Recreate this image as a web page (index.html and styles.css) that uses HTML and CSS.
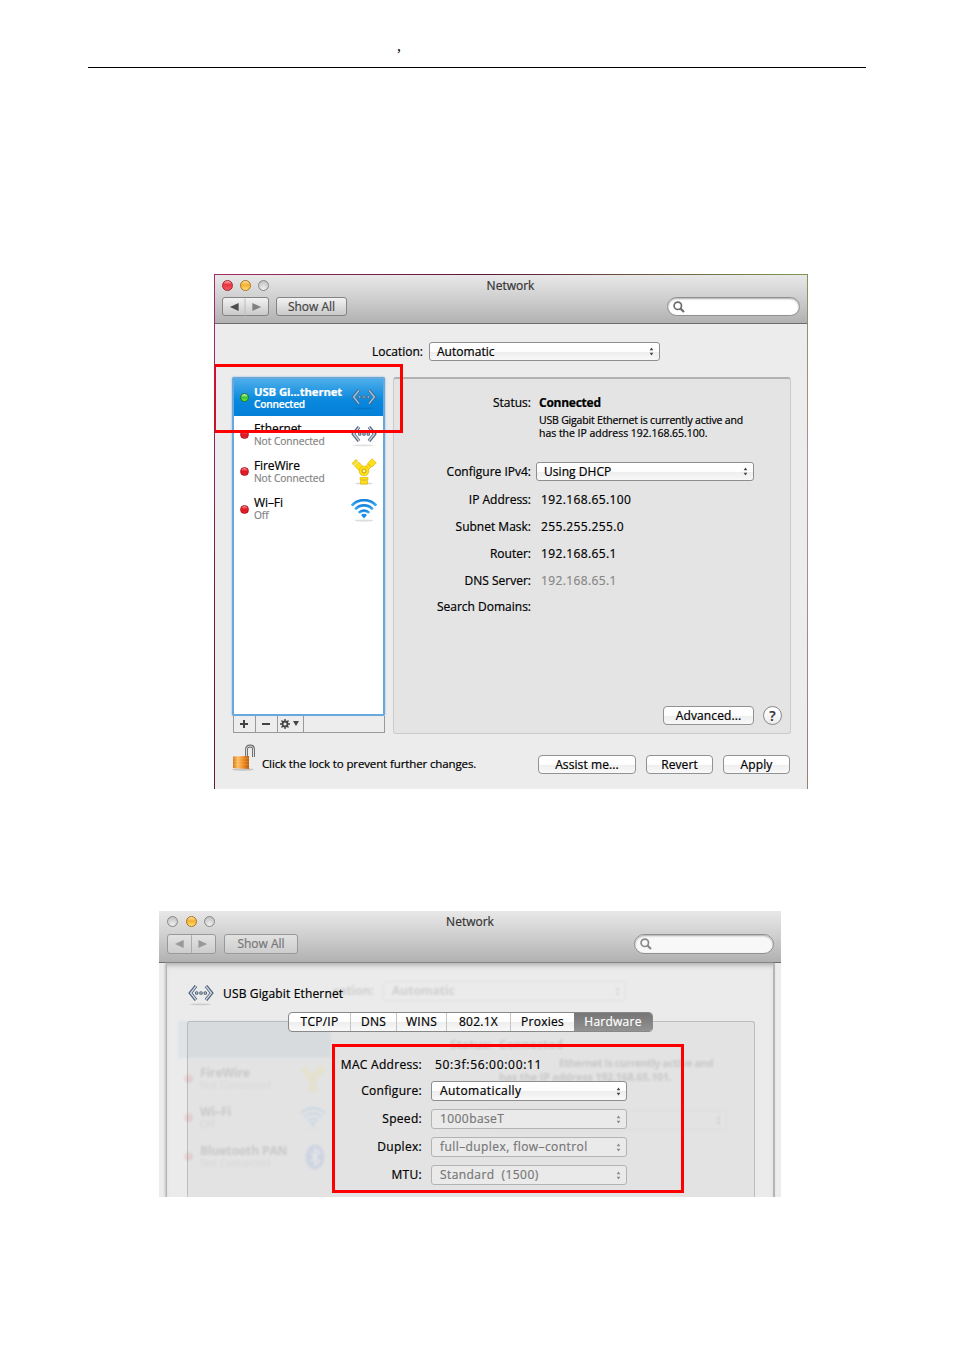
FILE: index.html
```html
<!DOCTYPE html>
<html lang="en">
<head>
<meta charset="utf-8">
<title>Network</title>
<link rel="stylesheet" href="styles.css">
</head>
<body>
<svg class="defs" width="0" height="0">
  <defs>
    <linearGradient id="blue" x1="0" y1="0" x2="0" y2="1"><stop offset="0" stop-color="#1b83dc"/><stop offset="1" stop-color="#35b0fb"/></linearGradient>
    <linearGradient id="gold" x1="0" y1="0" x2="1" y2="0"><stop offset="0" stop-color="#d9761a"/><stop offset=".3" stop-color="#ffc267"/><stop offset=".65" stop-color="#ef8b22"/><stop offset="1" stop-color="#b95d12"/></linearGradient>
    <symbol id="ethernet" viewBox="0 0 26 22">
      <ellipse cx="12.500" cy="20.300" rx="11" ry=".9" fill="#000" opacity=".13"/>
      <g fill="none" stroke="#52647b" stroke-width="3.400"><path d="M8 2 2.400 9 8 16M18 2 23.600 9 18 16"/></g>
      <g fill="none" stroke="#d3dce8" stroke-width="1.300"><path d="M8 2.300 2.600 9 8 15.700M18 2.300 23.400 9 18 15.700"/></g>
      <g fill="#dbe3ec" stroke="#52647b" stroke-width="1.100"><circle cx="8.700" cy="9" r="1.300"/><circle cx="13" cy="9" r="1.300"/><circle cx="17.300" cy="9" r="1.300"/></g>
    </symbol>
    <symbol id="firewire" viewBox="0 0 26 28">
      <ellipse cx="13" cy="25.500" rx="9" ry="1.200" fill="#000" opacity=".15"/>
      <g fill="#ffe11c" stroke="#e0b400" stroke-width=".7">
        <path d="M9 19.500h8v2H9zM9.500 22.500h7v3.500h-7zM1 5.500 5.200 1.500 6.600 3 2.600 7zM3.600 8 7.600 4l4.400 4.500-4 4zM16.500 5.500 21 .8 25.300 4.800 21 9z"/>
        <path d="m17 6 3 3-3.500 3.500-3-3z"/>
        <circle cx="13" cy="13" r="4.800"/>
      </g>
      <circle cx="13" cy="13" r="2" fill="#fff6b0" stroke="#c99d00"/>
    </symbol>
    <symbol id="wifi" viewBox="0 0 26 24">
      <ellipse cx="13" cy="21.500" rx="9" ry="1" fill="#000" opacity=".14"/>
      <g fill="none" stroke="url(#blue)" stroke-width="2.700"><path d="M.8 6.600C7.400-.7 18.600-.7 25.200 6.600"/><path d="M4.300 10.300c4.900-5.200 12.500-5.200 17.400 0"/><path d="M7.800 13.900c3-3 7.400-3 10.400 0"/></g>
      <path d="M10 16c1.700-1.700 4.300-1.700 6 0L13 19.500z" fill="#1c8fec"/>
    </symbol>
    <symbol id="bluetooth" viewBox="0 0 20 26"><ellipse cx="10" cy="13" rx="9.500" ry="12.500" fill="#2f62e0"/><path d="m5.500 8.500 9 9L10 21V5l4.500 3.500-9 9" fill="none" stroke="#fff" stroke-width="1.600"/></symbol>
    <symbol id="glass" viewBox="0 0 12 12"><circle cx="4.800" cy="4.800" r="3.700" fill="none" stroke="currentColor" stroke-width="1.700"/><path d="m7.500 7.500 3.500 3.500" stroke="currentColor" stroke-width="2.200"/></symbol>
    <symbol id="updown" viewBox="0 0 6 10"><path d="M.8 3.600h4.400L3 .2zM.8 6.400h4.400L3 9.800z" fill="currentColor"/></symbol>
  </defs>
</svg>

<div class="page">
  <header class="page-head">,</header>

  <section class="window first">
    <div class="titlebar">
      <div class="caption"><i class="light red"></i><i class="light amber"></i><i class="light"></i><span class="title">Network</span></div>
      <div class="toolbar">
        <div class="btn nav"><svg viewBox="0 0 46 18"><path d="M7 9l9-4v8z" fill="#4c4c4c"/><path d="M22.500 0v18" stroke="#bbb"/><path d="M39 9l-9-4v8z" fill="#808080"/></svg></div>
        <div class="btn showall">Show All</div>
        <div class="search"><svg><use href="#glass"/></svg></div>
      </div>
    </div>
    <div class="location"><span>Location:</span><div class="select"><b>Automatic</b><svg><use href="#updown"/></svg></div></div>
    <div class="main">
      <aside>
        <div class="list">
          <div class="item on"><i class="dot green"></i><div><strong>USB Gi...thernet</strong><small>Connected</small></div><svg class="eth"><use href="#ethernet"/></svg></div>
          <div class="item"><i class="dot"></i><div><strong>Ethernet</strong><small>Not Connected</small></div><svg class="eth"><use href="#ethernet"/></svg></div>
          <div class="item"><i class="dot"></i><div><strong>FireWire</strong><small>Not Connected</small></div><svg class="fw"><use href="#firewire"/></svg></div>
          <div class="item"><i class="dot"></i><div><strong>Wi–Fi</strong><small>Off</small></div><svg class="wf"><use href="#wifi"/></svg></div>
        </div>
        <div class="tools">
          <span><svg viewBox="0 0 8 8"><path d="M4 0v8M0 4h8" stroke="#444" stroke-width="2"/></svg></span>
          <span><svg viewBox="0 0 8 8"><path d="M0 4h8" stroke="#444" stroke-width="2"/></svg></span>
          <span class="gear"><svg viewBox="0 0 20 10"><circle cx="5" cy="5" r="2.500" fill="none" stroke="#444" stroke-width="1.800"/><path d="M5 0v2M5 8v2M0 5h2M8 5h2M1.500 1.500l1.400 1.400M7.100 7.100l1.400 1.400M8.500 1.500 7.100 2.900M2.900 7.100 1.500 8.500" stroke="#444" stroke-width="1.400"/><path d="M13 2h6l-3 5z" fill="#444"/></svg></span>
        </div>
      </aside>
      <div class="panel">
        <div class="row status"><label>Status:</label><strong>Connected</strong></div>
        <p>USB Gigabit Ethernet is currently active and<br><span>has the IP address 192.168.65.100.</span></p>
        <div class="row conf"><label>Configure IPv4:</label><div class="select"><b>Using DHCP</b><svg><use href="#updown"/></svg></div></div>
        <div class="row"><label>IP Address:</label><span>192.168.65.100</span></div>
        <div class="row"><label>Subnet Mask:</label><span>255.255.255.0</span></div>
        <div class="row"><label>Router:</label><span>192.168.65.1</span></div>
        <div class="row"><label>DNS Server:</label><span class="dim">192.168.65.1</span></div>
        <div class="row"><label>Search Domains:</label></div>
        <div class="more"><div class="push adv">Advanced...</div><div class="help">?</div></div>
      </div>
    </div>
    <footer>
      <svg class="lock" viewBox="0 0 24 28"><ellipse cx="11" cy="25.500" rx="11" ry="1.500" fill="#000" opacity=".15"/><path d="M14.500 13V5q0-3 3.500-3t3.500 3v8" fill="none" stroke="#666" stroke-width="2.800"/><path d="M14.500 13V5q0-3 3.500-3t3.500 3v8" fill="none" stroke="#ddd" stroke-width="1"/><path d="M1 12.500 17 12v13L1 24z" fill="url(#gold)"/><path d="M1 14.500h16M1 17.500h16M1 20.500h16" stroke="#ffd58c" stroke-width=".4" opacity=".5"/></svg>
      <span class="hint">Click the lock to prevent further changes.</span>
      <div class="push assist">Assist me...</div><div class="push">Revert</div><div class="push">Apply</div>
    </footer>
    <div class="mark"></div>
  </section>

  <section class="window second">
    <div class="titlebar">
      <div class="caption"><i class="light"></i><i class="light amber"></i><i class="light"></i><span class="title">Network</span></div>
      <div class="toolbar">
        <div class="btn nav"><svg viewBox="0 0 48 18"><path d="M7 9l9-4v8z" fill="#999"/><path d="M24 0v18" stroke="#aaa"/><path d="M40 9l-9-4v8z" fill="#999"/></svg></div>
        <div class="btn showall">Show All</div>
        <div class="search"><svg><use href="#glass"/></svg></div>
      </div>
    </div>
    <div class="sheet">
      <div class="service"><svg class="eth"><use href="#ethernet"/></svg><span>USB Gigabit Ethernet</span></div>
      <div class="group">
        <div class="tabs"><span>TCP/IP</span><span>DNS</span><span>WINS</span><span>802.1X</span><span>Proxies</span><span class="on">Hardware</span></div>
        <div class="form">
          <div class="row"><label>MAC Address:</label><span class="mac">50:3f:56:00:00:11</span></div>
          <div class="row"><label>Configure:</label><div class="select"><b>Automatically</b><svg><use href="#updown"/></svg></div></div>
          <div class="row"><label>Speed:</label><div class="select off"><b>1000baseT</b><svg><use href="#updown"/></svg></div></div>
          <div class="row"><label>Duplex:</label><div class="select off"><b>full–duplex, flow–control</b><svg><use href="#updown"/></svg></div></div>
          <div class="row"><label>MTU:</label><div class="select off"><b>Standard&nbsp; (1500)</b><svg><use href="#updown"/></svg></div></div>
        </div>
      </div>
      <div class="ghost">
        <span class="g-loc">cation:</span><span class="g-auto">Automatic</span>
        <span class="g-sel"><svg><use href="#updown"/></svg></span>
        <span class="g-st">Status:</span><span class="g-con">Connected</span>
        <span class="g-desc"><span>Ethernet is currently active and</span><br>has the IP address 192.168.65.101.</span>
        <span class="g-dhcp"><svg><use href="#updown"/></svg></span>
        <div class="g-list">
          <div class="item"><i class="dot"></i><div><strong>FireWire</strong><small>Not Connected</small></div><svg class="fw"><use href="#firewire"/></svg></div>
          <div class="item"><i class="dot"></i><div><strong>Wi–Fi</strong><small>Off</small></div><svg class="wf"><use href="#wifi"/></svg></div>
          <div class="item"><i class="dot"></i><div><strong>Bluetooth PAN</strong><small>Not Connected</small></div><svg class="bt"><use href="#bluetooth"/></svg></div>
        </div>
      </div>
    </div>
    <div class="mark"></div>
  </section>
</div>
</body>
</html>
```
FILE: styles.css
```css
* { box-sizing: border-box; }
body { margin: 0; background: #fff; color: #000; font: 12px/16px "Open Sans", "Noto Sans", sans-serif; }
svg { display: block; }
.defs { position: absolute; }
.page { height: 1350px; overflow: hidden; }
.page-head { height: 68px; margin: 0 88px; padding: 37px 0 0 309px; border-bottom: 1px solid #000; font: 16px/17px "Liberation Serif", serif; color: #000; }

.window { position: relative; overflow: hidden; background: #ececec; white-space: nowrap; -webkit-text-stroke: .2px; }
.first { width: 594px; height: 515px; margin: 206px 0 0 214px; border: 1px solid; border-bottom: 0; border-image: linear-gradient(120deg, #a32e67 0, #5e1436 30%, #7b9650 65%, #b98c9a 80%, #8d8276 100%) 1; }
.second { width: 622px; height: 286px; margin: 122px 0 0 159px; }

.titlebar { height: 49px; background: linear-gradient(#e8e8e8, #cecece 50%, #b1b1b1); border-bottom: 1px solid #6c6c6c; }
.caption { position: relative; display: flex; gap: 7px; height: 22px; padding: 5px 0 0 7px; }
.title { position: absolute; inset: 3px 0 0 -1px; text-align: center; color: #333; }
.light { width: 11px; height: 11px; border-radius: 50%; border: 1px solid #888; background: radial-gradient(circle at 50% 85%, #eee, #bbb); }
.light.red { border-color: #a32329; background: linear-gradient(#ffb0b0 0, #e9333f 40%, #f65c62 100%); }
.light.amber { border-color: #ad711b; background: linear-gradient(#fbe0a8 0, #f5b02c 45%, #ffe27a 100%); }
.toolbar { display: flex; padding-left: 7px; }
.btn { height: 19px; border: 1px solid #848484; border-radius: 3px; background: linear-gradient(#f2f2f2, #c9c9c9); color: #444; }
.nav { width: 47px; margin-right: 7px; }
.nav svg { width: 45px; height: 18px; }
.showall { width: 71px; text-align: center; line-height: 18px; }
.search { width: 133px; height: 19px; margin-left: auto; margin-right: 7px; padding: 4px 5px; border: 1px solid #909090; border-radius: 10px; background: #fff; box-shadow: inset 0 1px 2px #aaa; color: #6b6b6b; }
.search svg { width: 12px; height: 12px; margin-top: -1px; }

.select { display: flex; align-items: center; justify-content: space-between; height: 19px; padding: 0 5px 0 7px; border: 1px solid #8e8e8e; border-radius: 3px; background: linear-gradient(#fff, #fdfdfd 50%, #ededed 51%, #f8f8f8); }
.select b { font-weight: 400; letter-spacing: .05px; }
.select svg { width: 5px; height: 9px; color: #444; }
.select.off { background: #eaeaea; border-color: #b3b3b3; color: #777; }
.select.off svg { color: #888; }

.location { display: flex; gap: 6px; height: 53px; padding: 18px 0 0 157px; line-height: 19px; }
.location .select { width: 231px; }
.main { display: flex; gap: 8px; padding-left: 17px; }
aside { width: 153px; height: 356px; }
.list { height: 339px; border: 2px solid #68a8dd; border-radius: 2px; background: #fff; box-shadow: 0 0 2px #76aede; }
.item { display: flex; align-items: center; height: 37.3px; padding-left: 6px; }
.item > div { width: 97px; margin-left: 5px; line-height: 13px; }
.item strong, .item small { display: block; font-weight: 400; font-size: 12px; }
.item strong { letter-spacing: -.1px; }
.item small { font-size: 10.2px; color: #848484; letter-spacing: -.05px; }
.item.on { height: 37px; background: linear-gradient(#4daeea, #0787dd 60%, #0580d8); color: #fff; }
.item.on strong { font-weight: 700; font-size: 11.3px; letter-spacing: -.1px; }
.item.on small { color: #fff; font-weight: 600; letter-spacing: -.2px; }
.dot { width: 9px; height: 9px; flex: none; border-radius: 50%; border: 1px solid #b01019; background: linear-gradient(#ff9a9a 0, #e01722 45%, #e8202c 100%); }
.dot.green { border-color: #217b18; background: linear-gradient(#d0ffc8 0, #3cc32c 50%, #76ee4e 100%); }
.eth { width: 26px; height: 22px; margin-top: 3px; }
.item.on .eth { opacity: .75; }
.fw { width: 26px; height: 28px; }
.wf { width: 26px; height: 24px; margin-top: 3px; }
.bt { width: 20px; height: 26px; margin-left: 5px; }
.tools { display: flex; height: 17px; margin: 0 0 0 1px; border: 1px solid #999; border-top: 0; background: #ededed; }
.tools span { width: 22px; padding: 4px 0 0 6px; border-right: 1px solid #999; }
.tools svg { width: 8px; height: 8px; }
.tools .gear { width: 26px; padding: 3px 0 0 2px; }
.tools .gear svg { width: 20px; height: 10px; }

.panel { width: 398px; height: 357px; padding-top: 16px; border: 1px solid #cbcbcb; border-top: 2px solid #b2b2b2; border-radius: 3px; background: #e4e4e4; }
.row { display: flex; align-items: center; height: 26.7px; }
.panel label { width: 137px; margin-right: 10px; text-align: right; }
.panel .row span { letter-spacing: .37px; }
.panel .status { height: 16px; }
.status strong { margin-left: -2px; letter-spacing: -.25px; }
.panel p { margin: 3px 0 0 145px; font-size: 10.5px; line-height: 13px; letter-spacing: -.19px; }
.panel p span { letter-spacing: -.03px; }
.panel .conf { height: 27px; margin: 18px 0 1px; }
.panel .conf + .row { height: 28px; }
.conf .select { width: 218px; margin-left: -5px; }
.panel .dim { color: #888; }
.more { display: flex; gap: 9px; margin: 85.200px 0 0 269px; }
.push { width: 67px; height: 19px; border: 1px solid #929292; border-radius: 4px; background: linear-gradient(#fff, #fdfdfd 50%, #eee 52%, #f9f9f9); text-align: center; line-height: 17px; letter-spacing: .1px; }
.adv { width: 91px; }
.help { width: 19px; height: 19px; border: 1px solid #888; border-radius: 50%; background: linear-gradient(#fff, #eee); text-align: center; font-size: 14px; font-weight: 600; line-height: 18px; color: #333; }
footer { display: flex; align-items: center; gap: 10px; height: 45px; padding: 16px 0 0 17px; }
.lock { width: 24px; height: 28px; align-self: flex-start; margin-top: -6px; }
.hint { width: 266px; margin-left: -4px; font-size: 11.5px; letter-spacing: -.12px; padding-bottom: 2px; }
.assist { width: 98px; }
.mark { position: absolute; border: 3px solid #f00; }
.first .mark { left: -2px; top: 89px; width: 190px; height: 69px; }

.second .titlebar { height: 52px; }
.second .caption { height: 23px; padding: 5px 0 0 8px; gap: 7.5px; }
.second .title { top: 3px; left: 0; }
.second .toolbar { padding-left: 8px; }
.second .nav { width: 49px; margin-right: 8px; }
.second .nav svg { width: 47px; }
.second .btn { height: 20px; border-color: #999; background: linear-gradient(#e2e2e2, #cdcdcd); color: #777; }
.second .showall { width: 74px; }
.second .search { width: 140px; height: 20px; color: #888; background: #f8f8f8; }
.sheet { position: relative; width: 609px; height: 234px; margin-left: 7px; padding: 20px 18px 0 20px; border: solid #b5b5b5; border-width: 0 2px 0 1px; background: #ebebeb; box-shadow: inset 0 5px 5px -3px #aaa, -1px 0 2px #bbb; }
.service { display: flex; gap: 9px; height: 38px; padding-left: 1px; }
.service .eth { margin-top: 1px; }
.service span { line-height: 21px; letter-spacing: .15px; }
.group { position: relative; height: 180px; border: 1px solid #bdbdbd; border-bottom: 0; border-radius: 3px 3px 0 0; background: #e3e3e3; }
.tabs { position: relative; z-index: 2; display: flex; width: 365px; height: 20px; margin: -10px 0 0 100px; border: 1px solid #888; border-radius: 4px; overflow: hidden; background: linear-gradient(#fff, #fdfdfd 50%, #eee 52%, #f9f9f9); line-height: 18px; }
.tabs span { flex: none; width: 50px; border-left: 1px solid #c4c4c4; text-align: center; letter-spacing: .25px; }
.tabs span:first-child { width: 61px; border: 0; }
.tabs span:nth-child(2) { width: 46px; }
.tabs span:nth-child(4), .tabs span:nth-child(5) { width: 64px; }
.tabs .on { width: 78px; border: 0; background: linear-gradient(#757575, #929292); color: #fff; }
.form { position: relative; z-index: 2; padding-top: 20px; }
.form .row { height: 28px; }
.form .row:first-child { height: 26px; margin-bottom: -1px; }
.form label { width: 234px; margin-right: 9px; text-align: right; letter-spacing: .3px; }
.form .select { width: 196px; height: 20px; padding-left: 8px; }
.form .select b { letter-spacing: .42px; }
.form .mac { margin-left: 4px; letter-spacing: .7px; }
.second .mark { z-index: 3; left: 173px; top: 133px; width: 352px; height: 149px; }

.ghost { position: absolute; z-index: 1; inset: 0; opacity: .11; filter: blur(.8px); font-weight: 700; }
.ghost > span { position: absolute; }
.g-loc { right: 399px; top: 20px; }
.g-auto { left: 225px; top: 20px; }
.g-sel { left: 216px; top: 18px; width: 243px; height: 20px; border: 1px solid #999; border-radius: 3px; }
.g-sel svg, .g-dhcp svg { width: 5px; height: 9px; margin: 5px 5px 0 auto; }
.g-st { left: 283px; top: 74px; }
.g-con { left: 332px; top: 74px; }
.g-desc { left: 332px; top: 93px; font-size: 10.5px; line-height: 14px; letter-spacing: -.1px; }
.g-desc span { margin-left: 60px; letter-spacing: -.35px; }
.g-dhcp { left: 326px; top: 147px; width: 234px; height: 20px; border: 1px solid #999; border-radius: 3px; }
.g-list { position: absolute; left: 11px; top: 58px; width: 153px; padding-top: 38px; background: linear-gradient(#83a5bd 37px, transparent 37px); }
.g-list .item { height: 39px; }
.g-list .item > div { margin-left: 7px; width: 100px; }
.g-list .item strong { font-weight: 700; }
```
